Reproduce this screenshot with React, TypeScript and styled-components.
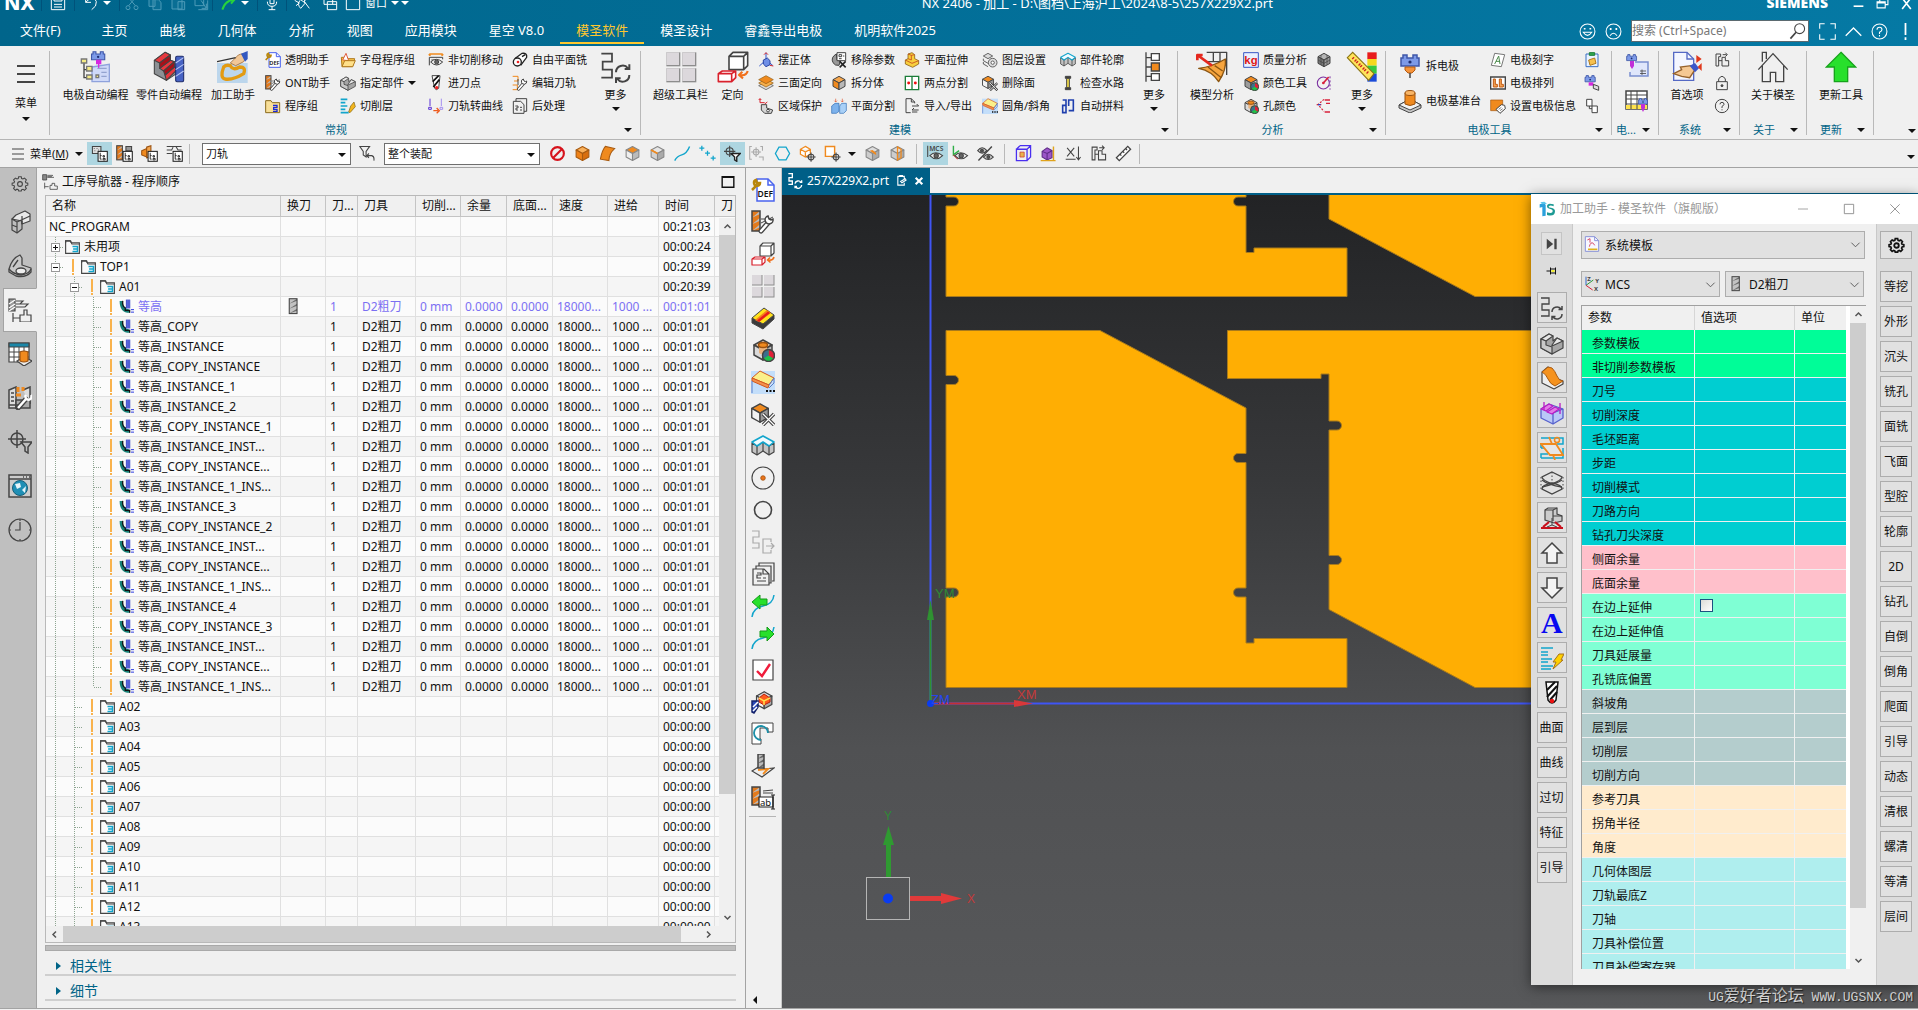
import React from "react";
import styled, { createGlobalStyle, css } from "styled-components";

const INK = "#444";
const ORANGE = "#f08a1e";
const TEAL = "#006487";
const CYAN = "#12a5cc";

const Global = createGlobalStyle`
  *, *::before, *::after { box-sizing: border-box; }
  body { margin: 0; overflow: hidden; }
  button, input, select { font: inherit; color: inherit; }
`;

/* ---------- icons (24 x 24 grid) ---------- */

const cube = (t: string, l: string, r: string, k = INK) => (
  <g stroke={k} strokeLinejoin="round">
    <path d="M12 2 21 7 12 12 3 7Z" fill={t} />
    <path d="M3 7 12 12V22L3 17Z" fill={l} />
    <path d="M21 7 12 12V22L21 17Z" fill={r} />
  </g>
);

const drill = (x: number, w: number, h: number, a: string, b: string, y = 1) => (
  <g stroke="none">
    <rect x={x} y={y} width={w} height={h} fill={a} />
    {[0, 1, 2].map((i) => (
      <path key={i} d={`M${x} ${y + h / 3 + (i * h) / 3}L${x + w} ${y + (i * h) / 3}V${y + (i * h) / 3 + 3}L${x} ${y + h / 3 + (i * h) / 3}Z`} fill={b} />
    ))}
    <rect x={x} y={y} width={w} height={h} fill="none" stroke={INK} />
  </g>
);

const wrench = (
  <g>
    <path d="M10 21 17 13" stroke={INK} strokeWidth="5" strokeLinecap="round" />
    <path d="M10 21 17 13" stroke="#fff" strokeWidth="2.5" strokeLinecap="round" />
    <path d="M22 9a4 4 0 1 1-5-3l1 3 2 1Z" fill="#fff" stroke={INK} />
  </g>
);

const electrode = (
  <g stroke="none">
    <path d="M5 1h4v3h6V1h4v3h2v8H3V4h2Z" fill="#7d9ae8" stroke="#3f57a8" />
    <circle cx="12" cy="8" r="1.6" fill="#1c2c70" />
  </g>
);

const blocks = (
  <path d="M3 3h7v4H7v14H3V3Zm4 10h5M12 8h5v5h5v8H12ZM13 4h6M17 1l3 3-3 3" />
);

const pathRefresh = (
  <g>
    <path d="M1 2H9V8H2V14H9V20H1" strokeWidth="1.3" />
    <path d="M12 16a5 5 0 0 1 9-3M22 10v3.500h-3.500M22 18a5 5 0 0 1-9 3M12 24v-3.500h3.500" strokeWidth="1.500" />
  </g>
);

const eye = (
  <g>
    <path d="M4 15q8-8 18 0-9 9-18 0Z" fill="#eee" />
    <circle cx="13" cy="15" r="3" fill="#666" />
  </g>
);

const target = (
  <g>
    <circle cx="17" cy="17" r="4" />
    <path d="M17 10.500V23.500M10.500 17H23.500" />
  </g>
);

const treeBox = (
  <g>
    <rect x="10" y="9" width="13" height="14" fill="#fff" stroke="#222" />
    <path d="M13 11v9h2M13 15h2M17 15h2v2h-2zM17 19h3v2h-3z" stroke="#222" strokeWidth="1.300" />
  </g>
);

const pie = (
  <g stroke="none">
    <circle cx="17.500" cy="17.500" r="6" fill="#1fc24a" />
    <path d="M17.500 17.500V11.500a6 6 0 0 1 5 9Z" fill="#e02038" />
    <path d="M17.500 17.500V11.500a6 6 0 0 0-5 9Z" fill="#3a6f8e" />
    <circle cx="17.500" cy="17.500" r="6" stroke={INK} />
  </g>
);

const ICONS: Record<string, React.ReactNode> = {
  save: <g stroke="#fff"><path d="M2 2H22V22H2ZM6 2V9H18V2M6 14H18M6 18H18" /></g>,
  undo: <path d="M4 3V11H12M4 11Q16-2 20 10 21 17 13 22" stroke="#fff" />,
  cut: <g stroke="#4d9bb8"><circle cx="6" cy="19" r="3" /><circle cx="18" cy="19" r="3" /><path d="M7 16 18 3M17 16 6 3" /></g>,
  copy: <path d="M3 2H12V17H3ZM9 7H17L21 11V22H9Z" stroke="#4d9bb8" fill="#0a6e94" />,
  paste: <path d="M3 4H18V21H3ZM7 1H14V6H7ZM12 10H22V22H12Z" stroke="#4d9bb8" fill="#0a6e94" />,
  pasteTo: <path d="M3 4H16V16H3ZM12 8 20 20M20 13V20H13M8 22H22V8" stroke="#4d9bb8" />,
  greenCurve: <path d="M2 22Q6 9 18 7M12 1 21 6 15 13" stroke="#27d33c" strokeWidth="3" />,
  mic: <path d="M9 2H15V13H9ZM5 10Q5 17 12 17T19 10M12 17V22M7 22H17" stroke="#fff" />,
  swap: <path d="M1 8 8 12 3 16M7 5 17 12 10 20Q4 14 9 8M22 4 15 9 23 20" stroke="#fff" />,
  windows: <path d="M3 1H16V14M3 1V14H8M8 10H22V22H8ZM8 14H22" stroke="#fff" />,
  square: <path d="M2 0V22H22V0" stroke="#fff" />,

  eprog: <g><g transform="translate(7 0) scale(.55)">{electrode}</g><path d="M9 12 22 10V23H9Z" fill="#cfd9f8" stroke="#8fa2dc" strokeWidth="1" /><path d="M12 6.500H16V10H14.500V13H13.500V10H12Z" fill="#d628e0" stroke="none" /><path d="M3 8V20H6M3 14H6" strokeWidth="1" /><g fill="#f5eb86" stroke="#777" strokeWidth="1"><path d="M1 6H5V9H1ZM5 11.500H9V15H5ZM5 18H9V21H5ZM12 18H14V20H12Z" /></g><path d="M13 13H20M16 16H20M16 19H20" stroke="#93a3d0" strokeWidth="1" /></g>,
  part: <g strokeLinejoin="round" strokeWidth=".8"><path d="M1 7 9 1 13 3V7L16 8V12L19 13V16L10 22 1 17Z" fill="#8d9195" /><path d="M1 7 9 1 13 3 5 9ZM5 13 13 7 16 8 8 15ZM9 18 16 12 19 13 10 22Z" fill="#e8383e" /><path d="M5 9 13 3V7L5 13ZM8 15 16 8V12L9 18Z" fill="#a81019" /><rect x="17" y="4" width="6" height="19" rx="1" fill="#4763c4" stroke="#1f2d6b" /><path d="M17 9 23 5M17 14 23 10M17 19 23 15" stroke="#b9c7f5" /></g>,
  assist: <g stroke="none"><path d="M0 9H23V24H0Z" fill="#bcd6ec" /><path d="M5 12Q2 20 6 21 12 22 20 17 22 12 17 12 12 15 10 11 7 10 5 12Z" stroke="#e39b12" strokeWidth="2.500" /><path d="M10 9 16 3Q20 1 22 4L20 8 14 11Z" fill="#f2c796" stroke="#a06a35" strokeWidth=".6" /><path d="M18 2 23 0V6L21 8Z" fill="#3358c0" /><path d="M0 8 14 5" stroke="#333" strokeWidth="1" /></g>,
  def: <g><path d="M6 1H17L23 7V23H6Z" fill="#fff" stroke="#4a63ee" /><path d="M17 1V7H23" stroke="#4a63ee" /><text x="6.500" y="19" fontSize="8.500" fontFamily="Noto Sans" fontWeight="600" fill="#111" stroke="none">DEF</text><path d="M1 12 6 7M9 5a3 3 0 1 1-4-3l1 3Z" stroke="#b8860b" strokeWidth="2.500" /></g>,
  ont: <g>{drill(1, 8, 20, "#e37a1c", "#bbb")}<path d="M10 9H20M10 13 22 7" strokeWidth="1" />{wrench}</g>,
  folderS: <g><path d="M1 4H9L11 7H22V22H1Z" fill="#f8df98" stroke="#8a6a1c" /><path d="M12 11H18V14H13V17H18V20H12" stroke="#1b2bd6" strokeWidth="2" /></g>,
  folderA: <g><path d="M2 8H9L11 10H22L19 22H3Z" fill="#f9c64e" stroke="#b07a1e" /><path d="M9 2 4 12 13 13Z" fill="#fff" stroke="#e05a3a" /><path d="M3 22 7 13H23L19 22Z" fill="#ffe08a" stroke="#b07a1e" /></g>,
  spec: <g strokeLinejoin="round" strokeWidth="1.200"><path d="M1 8 9 3 13 5V10L17 7 23 10V17L12 23 1 17Z" fill="#a6a6a6" /><path d="M1 8 9 3 13 5 6 10ZM12 14 17 7 23 10 12 15Z" fill="#e6e6e6" /><path d="M1 8 6 10V14L12 16V23L1 17Z" fill="#c9c9c9" /></g>,
  layers: <g><path d="M1 2H11M1 7H8M1 12H11M1 17H8M1 22H13" stroke={CYAN} strokeWidth="2.400" /><path d="M21 6 23 13 15 22 13 21 16 12Z" fill="#f3b51d" stroke="#7d6210" strokeWidth="1" /></g>,
  bolt: <g><path d="M1 2H13M1 6H8M1 9H8M1 13H12M1 16H8M1 20H13M1 23H11" stroke={CYAN} strokeWidth="1.600" /><path d="M19 8H24L21 14H23L13 23 16 16H13Z" fill="#ffd000" stroke="#a5721a" strokeWidth="1" /></g>,
  noncut: <g><path d="M3 6V3H21V6M3 3 1 5M21 3 23 5" stroke={ORANGE} strokeWidth="2" /><path d="M2 8H22V11M2 8V20M5 12H10" />{eye}</g>,
  entry: <g><path d="M6 1H18L16 20Q12 24 10 20Z" fill="#fff" /><path d="M7 10 16 1M8 18 17 7" stroke="#111" strokeWidth="2.600" /><circle cx="13" cy="19" r="2.500" fill="#e22" stroke="none" /></g>,
  pathcurve: <g><path d="M3 1V12M1 14h4v3H1Z" stroke="#5b32d6" /><path d="M20 1V12M18 14h4v3h-4Z" stroke="#a48df0" /><path d="M8 19H15M13 15 17 19 13 23" stroke="#ee5a1c" strokeWidth="2" /></g>,
  free: <g stroke="#222" strokeWidth="2"><path d="M4 10 15 2Q23 1 22 8L13 20" fill="#fff" /><circle cx="8" cy="15" r="6" fill="#fff" /><circle cx="9" cy="15" r="2" fill="#e22" stroke="none" /><path d="M15 7 20 4" /></g>,
  edit: <g><path d="M1 2H9V9H3M1 15H8V22H1" stroke={ORANGE} /><path d="M9 6V15" />{wrench}</g>,
  post: <path d="M6 5V1H22V20H18M2 5H13L18 10V23H2ZM5 12H9V15H6V18H9M12 14H15M12 18H15" />,
  docs: <path d="M8 4V1H23V19H21M5 7V4H20V21H18M2 7H13L18 12V23H2ZM12 7V12H18M6 11H10V13H6V16H10M6 19H15M12 16H15" strokeWidth="1.200" />,
  pathRefresh,
  tiles: <g stroke="none">{[0, 1, 2, 3].map((i) => <g key={i} transform={`translate(${1 + (i % 2) * 12} ${1 + Math.floor(i / 2) * 12})`}><path d="M0 0H10.500V10.500H0Z" fill="#8d8d8d" /><path d="M0 0H9.500V9.500H0Z" fill="#dcd8dc" /></g>)}</g>,
  orient: <g strokeLinejoin="round" strokeWidth="1.200"><path d="M9 4H20V14H9ZM9 4 12 1H23V11L20 14M20 4 23 1" fill="#fff" /><path d="M1 17H11V23H1ZM1 17 4 15H14V20L11 23M11 17 14 15" stroke="#d9212c" fill="#fff" /><path d="M23 15Q22 19 17 18M19 15.500 16.500 18 19.500 20.500" stroke="#f0701c" strokeWidth="1.600" /></g>,
  align: <g><path d="M12 1V12L2 21M12 12 22 20" stroke="#3154c8" /><path d="M8 12 14 9 18 13V19L12 22 8 18Z" fill="#6f8fe6" stroke="#2c46a3" /><path d="M9 4 12 1 15 4M18 20 23 21" stroke="#d3262d" /></g>,
  three: <g strokeLinejoin="round" strokeWidth="1"><path d="M1 16 12 10 23 16 12 22Z" fill="#dcdcdc" /><path d="M1 12 12 6 23 12 12 18Z" fill="#f6ae4b" stroke="#8f5a12" /><path d="M1 7 12 1 23 7 12 13Z" fill="#f08a1e" stroke="#8f5a12" /></g>,
  region: <g><path d="M3 1V7H10M1 3 3 1 5 3M14 6 10 9" stroke="#d9212c" /><path d="M5 10H13V15L22 18 20 23H10L5 18Z" fill="#d5d5d5" /><circle cx="15" cy="19" r="2" fill="#fff" /></g>,
  rmparam: <g><path d="M8 3Q-1 8 3 16 6 21 12 20L14 14 9 12Z" fill="#999" /><path d="M9 1H22V13H9Z" fill="#fff" /><path d="M12 4H16V7H12ZM12 10H16M18 6H20" /><path d="M13 14 22 23M22 14 13 23" stroke="#222" strokeWidth="2.400" /></g>,
  split: cube("#f5a64c", "#f08a1e", "#b8b8b8"),
  psplit: <g strokeWidth="1"><path d="M1 12 6 8H12V20L8 23H1Z" fill="#7db2ec" stroke="#2f6db3" /><path d="M13 12 16 8H23V19L19 23H13Z" fill="#a9d0f7" stroke="#2f6db3" /><path d="M7 1V6M5 4 7 6 9 4M17 1V6M15 4 17 6 19 4" stroke="#e0552c" /></g>,
  pull: <g strokeLinejoin="round" strokeWidth="1.200"><path d="M2 12 6 10V3L12 1 16 4V10L22 13V18L13 23 2 18Z" fill="#f8cf3d" stroke="#8b5d12" /><path d="M6 3 11 5 16 4M11 5V12L6 10M2 12 12 17 22 13" stroke="#c4431d" /></g>,
  twopt: <g><path d="M2 2H22V22H2ZM12 2V22" stroke="#1c7d3a" strokeWidth="2" fill="#fff" /><circle cx="7" cy="12" r="2.200" fill="#e11" stroke="none" /><circle cx="17" cy="12" r="2.200" fill="#e11" stroke="none" /></g>,
  io: <path d="M16 8V6L11 1H3V22H10M11 1V6H16M12 12H22L19 9M22 18H12L15 15M12 21H20" />,
  layerset: <g strokeWidth="1.200"><path d="M2 6 9 2 16 6 9 10ZM2 10V13L9 17M2 15V18L9 22" fill="#ddd" /><circle cx="16" cy="16" r="6.500" fill="#ddd" /><circle cx="16" cy="16" r="2.500" fill="#fff" /></g>,
  delface: <g><g transform="translate(-2 0) scale(.92)">{cube("#f08a1e", "#f2f2f2", "#9a9a9a")}</g><path d="M12 12 23 23M23 12 12 23" stroke={INK} strokeWidth="3.500" /><path d="M12 12 23 23M23 12 12 23" stroke="#fff" strokeWidth="1.200" /></g>,
  fillet: <g strokeWidth="1"><path d="M0 1H24V24H0Z" fill="#c3defa" stroke="none" /><path d="M1 8 9 1 23 8 18 15Z" fill="#fbf08a" stroke="#d3581d" /><path d="M1 8 18 15 17 18 1 11Z" fill="#f2914d" stroke="#d3581d" /><path d="M1 11V23M18 15 23 8V13L18 18" stroke="#5a7fc8" /><path d="M15 21H17M18.500 21H20.500M22 21H24" stroke="#111" strokeWidth="2" /></g>,
  contour: <g strokeLinejoin="round" strokeWidth="1.200"><path d="M1 9V18L6 21 12 17 18 21 23 18V9L18 12 12 8 6 12Z" fill="#c4c4c4" /><path d="M6 12V21M18 12V21M12 8V17" /><path d="M1 8 12 2 23 8 18 12 12 8 6 12Z" fill="#f2fbff" stroke={CYAN} strokeWidth="1.600" /></g>,
  water: <g><path d="M8 2H16V5H8ZM8 19H16V22H8Z" fill="#444" /><path d="M10 5H14V19H10Z" fill="#f7e04b" /></g>,
  nest: <path d="M4 3H9V22H4V11H9M13 19H20V3H13V12" stroke="#1f3fae" strokeWidth="2.400" />,
  moreTree: <g strokeWidth="1"><path d="M6 1V23M6 5H10M6 12H10M6 19H10" /><path d="M10 2H16V7H10ZM10 17H16V22H10Z" fill="#fff" /><path d="M10 9H16V15H10Z" fill={ORANGE} /></g>,
  analysis: <g strokeWidth="1" strokeLinejoin="round"><path d="M8 1H23V18" /><path d="M13 1V8M18 1V9M8 8H23" /><path d="M2 13Q12 12 22 6 23 14 17 23 12 15 2 13Z" fill="#f7a53e" stroke="#8b5512" /><path d="M9 12 19 20M14 11 20 15" stroke="#8b5512" /><path d="M12 11 1 3M1 7V3H5" stroke="#e5281e" strokeWidth="2" /></g>,
  kg: <g><path d="M1 1H23V23H1Z" fill="#e9f0ff" stroke="#3a57c4" /><text x="2" y="18" fontSize="17" fontWeight="700" fontFamily="Liberation Sans" fill="#e01515" stroke="none">kg</text></g>,
  colortool: <g>{cube("#f08a1e", "#9c9c9c", "#c9c9c9")}{pie}</g>,
  holecolor: <g>{cube("#f7d9ba", "#dadada", "#b9b9b9")}<path d="M8 7V15Q12 18 16 15V7Z" fill="#e9b27e" stroke="none" /><ellipse cx="12" cy="7" rx="4.500" ry="2.500" fill="#f08a1e" stroke="#9b5210" />{pie}</g>,
  mesh: <g>{cube("#b5b5b5", "#777", "#999")}<path d="M3 12 12 17 21 12M7.500 4.500V19M16.500 4.500V19" strokeWidth="1" /></g>,
  gauge: <g><circle cx="11" cy="12" r="9" stroke="#7b2fa0" strokeWidth="1.600" /><path d="M11 12 19 3" stroke="#d8203a" strokeWidth="2.500" /><circle cx="11" cy="12" r="2" fill="#d8203a" stroke="none" /><path d="M21 2V22" stroke="#7b2fa0" strokeDasharray="3 3" /></g>,
  dist: <g><path d="M12 2 3 10 12 20M1 10H8" stroke="#d8203a" strokeDasharray="3 2" strokeWidth="1.800" /><path d="M3 10H7" stroke="#2548c8" strokeWidth="2" /><path d="M13 3H21M13 21H21M15 8H21" stroke="#d8203a" strokeWidth="2" /></g>,
  ruler: <g stroke="none"><path d="M16 1H23V6H16Z" fill="#e81c1c" /><path d="M16 6H23V11H16Z" fill="#f4d81c" /><path d="M16 11H23V17H16Z" fill="#36c93c" /><path d="M16 17H23V23H16Z" fill="#1c4bd8" /><path d="M1 5 5 1 21 17 17 22Z" fill="#ffe45a" stroke="#8b7412" strokeWidth=".8" /><path d="M5 5 8 8M8 8 11 11M11 11 14 14M14 14 17 17" stroke="#c22" strokeWidth="2" strokeDasharray="1 1.500" /></g>,
  eld: <g>{electrode}<path d="M7 13H17V16L14 19H10L7 16Z" fill="#f6943a" stroke="#b35a12" strokeWidth="1" /><path d="M12 19V24" stroke="#444" /></g>,
  elbase: <g strokeLinejoin="round" strokeWidth="1"><path d="M1 16 12 10 23 16V19L12 24 1 19Z" fill="#c7c7c7" /><path d="M1 16 12 10 23 16 12 21Z" fill="#f2f2f2" /><path d="M7 4V15Q12 18 17 15V4Z" fill="#f08a1e" stroke="#9b5210" /><ellipse cx="12" cy="4" rx="5" ry="2.500" fill="#f9b566" stroke="#9b5210" /></g>,
  letter: <g><path d="M7 2 22 4 17 22 2 20Z" fill="#fff" stroke="#777" /><path d="M7 18 13 6 15 18M9 14H15" stroke="#4a8a4a" /></g>,
  arrange: <g><path d="M1 3H23V21H1Z" fill="#fff" strokeWidth="2" /><path d="M5 6H8V14H11V18H5ZM14 6H17V14H20V18H14Z" fill="#f3a254" stroke="#c05a12" /></g>,
  info: <g><path d="M1 3H19V19H1Z" fill="#f08a1e" stroke="#a7560d" strokeWidth="1" /><path d="M9 17 17 10 22 11 23 16 15 23Z" fill="#fff" /><path d="M13 17 17 14M15 19 19 16" strokeWidth="1" /></g>,
  note: <g><path d="M3 3H21V22H3Z" fill="#e9f3ff" stroke="#3a6fc4" /><path d="M8 1H16V5H8Z" fill="#2fa84c" stroke="#1c7d3a" /><path d="M7 12 16 9 18 17 9 20Z" fill="#f6c04e" stroke="#b07a1e" /></g>,
  elsmall: <g><g transform="translate(-1 0) scale(.85)">{electrode}</g><path d="M7 11H14V16H7Z" fill="#d628e0" stroke="none" /><path d="M14 14 22 17V23L14 20Z" fill="#ddd" /></g>,
  steps: <path d="M4 2H12V12H4ZM12 12H20V22H12ZM8 12V16H12" fill="#fff" />,
  elview: <g><path d="M10 8H23V22H5V18" fill="#dfe6fb" stroke="#7a8fcf" /><g transform="scale(.55)">{electrode}</g><path d="M5 7H9V12L7 15 5 12Z" fill="#c12fd8" stroke="none" /><path d="M15 17H21M15 19.500H21M17 15.500V21" strokeWidth=".8" /></g>,
  eltable: <g><path d="M1 2H22V20H1Z" fill="#fff" /><path d="M1 16H22V20H1Z" fill="#ffe34d" stroke="none" /><path d="M1 6H22M1 10H22M1 15H22M6 2V20M12 2V20" strokeWidth="1" /><g transform="translate(12 9) scale(.5)">{electrode}</g><path d="M16 15H20V19L18 23 16 19Z" fill="#c12fd8" stroke="none" /></g>,
  pref: <g strokeWidth="1"><path d="M2 1H12L17 6V22H2Z" fill="#f4f6ff" stroke="#5569c4" /><path d="M12 1V6H17" stroke="#5569c4" /><path d="M2 17 8 14 7 12 15 11 18 14 14 20 8 19Z" fill="#f5c893" stroke="#96622c" /><path d="M14 11 18 9 21 13 18 16Z" fill="#3c57c8" stroke="none" /><path d="M19 3 23 6 19 9ZM23 9 20 12 23 15Z" fill="#e0381c" stroke="none" /></g>,
  blocks,
  lock: <g><path d="M4 10H20V22H4ZM7 10V6Q12-2 17 6V10" /><circle cx="12" cy="16" r="1.500" fill={INK} /></g>,
  help: <g><circle cx="12" cy="12" r="10" /><path d="M9 9.500Q9 6.500 12 6.500T15 9.500Q15 11 12 12.500V15M12 17V18.500" /></g>,
  home: <path d="M1 14 12 2 23 14M4 11V23H10V16H14V23H20V11M4 8V1H7V6" strokeWidth="1" />,
  update: <path d="M12 1 23 12H17V23H7V12H1Z" fill="#28e02c" stroke="#17a31c" strokeWidth="1" />,

  tbProgram: <g><path d="M2 2H14V12H2Z" fill="#ddd" /><path d="M4 5H5M8 5H9M5 8H6M10 7H11" />{treeBox}</g>,
  tbTool: <g>{drill(1, 8, 20, "#e37a1c", "#bbb")}<path d="M14 2H22V8H14Z" fill="#999" />{treeBox}</g>,
  tbGeom: <g><path d="M1 8 8 5V17L1 14Z" fill="#f08a1e" stroke="#9b5210" /><path d="M8 3 14 1V17L8 18Z" fill="#f6a64c" stroke="#9b5210" />{treeBox}</g>,
  tbMethod: <g><path d="M1 2H22M1 7H8L10 3M1 12H9M14 2 17 7H22" />{treeBox}</g>,
  filter: <path d="M1 2H15L10 9V17L6 14V9ZM14 12 11 15 14 18M12 15H18Q22 16 21 22" />,
  no: <g stroke="#d6131c" strokeWidth="3"><circle cx="12" cy="12" r="9" /><path d="M6 18 18 6" /></g>,
  cubeO: cube("#f9b05a", "#ef8218", "#d86e0e", "#a85a10"),
  sheet: <path d="M2 20Q4 8 9 2L22 5Q14 12 14 22Z" fill="#f08a1e" stroke="#a85a10" />,
  cubeTop: cube("#f08a1e", "#eee", "#bbb", "#888"),
  cubeEdge: <g>{cube("#e6e6e6", "#d2d2d2", "#aaa", "#888")}<path d="M3 7 12 12" stroke={ORANGE} strokeWidth="2.500" /></g>,
  curve: <path d="M1 22Q4 16 11 14T22 2" stroke={CYAN} strokeWidth="2" />,
  points: <path d="M4 1V8M.500 4.500H7.500M12 8V15M8.500 11.500H15.500M20 15V22M16.500 18.500H23.500" stroke={CYAN} strokeWidth="1.800" />,
  snapFilter: <g><circle cx="8" cy="9" r="5" /><path d="M8 1V17M0 9H16" /><path d="M10 12H23L18 17V23L15 21V17Z" fill="#fff" stroke="#222" strokeWidth="2" /></g>,
  snapDim: <g stroke="#aaa"><path d="M4 2H1V20H4M16 2H19V8" /><circle cx="10" cy="10" r="4" /><path d="M10 3V17M3 10H17M14 17H20V22" /></g>,
  hex: <path d="M7 3H17L22 12 17 21H7L2 12Z" stroke={CYAN} strokeWidth="1.800" />,
  cubeTarget: <g><path d="M9 2 16 6V13L9 17 2 13V6ZM2 6 9 10 16 6M9 10V17" stroke={ORANGE} strokeWidth="1.800" fill="#fff" />{target}</g>,
  boxTarget: <g><path d="M2 2H15V16H2Z" stroke={ORANGE} strokeWidth="2" fill="#fff" />{target}</g>,
  cubeSlant: <g>{cube("#ddd", "#ccc", "#aaa", "#888")}<path d="M8 8 17 14V11L12 7Z" fill={ORANGE} stroke="none" /></g>,
  cubeSection: <g>{cube("#ddd", "#ccc", "#aaa", "#888")}<path d="M12 3 17 6V18L12 21Z" stroke={ORANGE} strokeWidth="1.800" /></g>,
  mcs: <g><text x="3" y="8" fontSize="9.500" fontFamily="Noto Sans" fontWeight="600" fill={INK} stroke="none">MCS</text><path d="M1 1V17" stroke={INK} />{eye}</g>,
  axisEye: <g><path d="M2 1V14L10 8" stroke="#2fae47" strokeWidth="2" /><path d="M2 14 8 20" stroke="#c33" />{eye}</g>,
  eyeOff: <g><path d="M1 8Q7 0 14 8 7 15 1 8Z" fill="#ccc" /><path d="M9 17Q16 9 23 17 16 24 9 17Z" fill="#ccc" /><circle cx="7" cy="8" r="2" fill="#555" /><circle cx="16" cy="17" r="2" fill="#555" /><path d="M2 22 21 2" strokeWidth="2" /></g>,
  wireCube: <g><path d="M2 6H17V22H2ZM7 1H22V17L17 22M2 6 7 1M17 6 22 1" stroke="#4a2ff0" strokeWidth="1.800" /><path d="M7 10H13V17H7Z" fill="#e8b24a" stroke="#c33" strokeWidth="1" /></g>,
  purple: <g><path d="M3 9 10 4 17 8V18L10 21 3 17Z" fill="#9b56c8" stroke="#5d2a86" /><path d="M3 9 10 12 17 8M10 12V21" stroke="#5d2a86" /><path d="M1 22H22M19 2V22" stroke="#e0a31c" strokeWidth="2" /></g>,
  xy: <path d="M3 4 13 16M13 4 3 16M19 2V20M16 17 19 21 22 17M1 20H15" />,
  rulerS: <path d="M2 18 18 2 22 6 6 22ZM7 13 9 15M11 9 13 11M15 5 17 7" fill="#fff" strokeWidth="1.800" />,

  gear: <g><path d="M10 2h4l.600 2.800 2 .8L19 4.200l2.800 2.800-1.500 2.400.8 2L24 12v3l-2.800.600-.9 2 1.500 2.400L19 22.800l-2.400-1.500-2 .7L14 24h-4l-.600-2-2-.8L5 22.800 2.200 20l1.500-2.400-.8-2L0 15v-3l2.900-.600.8-2L2.200 7 5 4.200l2.400 1.400 2-.8Z" transform="translate(1.500 .5) scale(.87)" strokeWidth="1.600" /><circle cx="12" cy="12" r="3.200" /></g>,
  parts: <g strokeLinejoin="round" strokeWidth="1.200"><path d="M4 9 14 5 14 11V19L9 23 4 20Z" fill="#bdbdbd" /><path d="M8 5 17 1 22 4V11L14 14V11L4 9Z" fill="#e9e9e9" /><path d="M4 9 9 12 22 6M9 12V23M14 6V14M4 15 9 17" /></g>,
  bracket: <g strokeLinejoin="round" strokeWidth="1.300"><path d="M1 15Q4 4 12 1L14 4V11L23 14V18Q18 24 8 22L1 18Z" fill="#c8c8c8" /><ellipse cx="13" cy="17" rx="5" ry="3" fill="#eee" /><path d="M1 15Q5 20 13 21 21 20 23 15M10 6 5 13" /></g>,
  opnav: <g strokeWidth="1.200"><path d="M1 1H7V13H1Z" fill="#999" /><path d="M1 6 7 2M1 10 7 6M1 13 7 9" stroke="#fff" /><path d="M8 3H15L12 6H8M8 6H20L17 9H8M5 15V24M5 20H12M12 24V17H16V12H19V17H23V24Z" /></g>,
  tablebox: <g strokeWidth="1.200"><path d="M1 1H21V20H1Z" fill="#fff" /><path d="M1 1H21V5H1Z" fill="#1b87a8" /><path d="M1 10H21M1 15H21M6 5V20M11 5V20M16 5V20" strokeWidth="1" /><path d="M9 19 16 15 24 19 16 24Z" fill="#eee" /><path d="M12 10V19Q16 21 20 19V10Q16 8 12 10Z" fill="#f08a1e" stroke="#9b5210" /></g>,
  machine: <g><path d="M1 4 8 1V22H1ZM15 4 22 1V18" fill="#ddd" /><path d="M8 14H22V22H8Z" fill="#aaa" /><path d="M3 7H6M3 11H6M3 15H6M1 19H14" /><path d="M10 1V6M15 1V5M8 9H13" stroke={ORANGE} strokeWidth="3" /><path d="M10 22 18 13" stroke={INK} strokeWidth="5" strokeLinecap="round" /><path d="M10 22 18 13M23 9a3 3 0 1 1-5 0" stroke="#fff" strokeWidth="2.500" /></g>,
  snap: <g><circle cx="9" cy="9" r="6" /><path d="M9 0V18M0 9H18M13 12H24L20 17V23L17 21V17Z" /></g>,
  globe: <g><path d="M1 1H23V23H1ZM1 5H23" fill="#ccc" /><path d="M15 3H16M18 3H19M21 3H22" /><circle cx="12" cy="14" r="7.500" fill="#1f8fb5" stroke="#18607a" strokeWidth="1" /><path d="M7 10 12 9 13 13 9 15ZM14 16 18 12 17 19Z" fill="#e6f5fa" stroke="none" /></g>,
  clock: <g strokeWidth="1.200"><circle cx="12" cy="12" r="11" /><path d="M12 4V12H7M12 1V3M12 21V23M1 12H3M21 12H23" /></g>,

  eraser: <g strokeLinejoin="round" strokeWidth="1"><path d="M1 12V17L12 23 23 13V9L12 18Z" fill="#3b3b3b" /><path d="M1 12 13 2 23 9 12 18Z" fill="#ffe21c" /><path d="M4 14 16 4 20 7 8 16Z" fill="#f5801c" stroke="none" /><path d="M6 14.500 17 5.500 19 7 8 16Z" fill="#e81c1c" stroke="none" /></g>,
  circleDot: <g><circle cx="12" cy="12" r="11" strokeWidth="1.100" /><circle cx="12" cy="12" r="2.300" fill="#e8741a" stroke="#a5500e" strokeWidth=".8" /></g>,
  circle: <circle cx="12" cy="12" r="8.500" strokeWidth="1.600" />,
  pathExport: <path d="M1 1H8V7H2V13H8V18H1M20 12V9H12V23H20V20M15 16H23M20 13 23 16 20 19" stroke="#aaa" strokeWidth="1.200" />,
  greenLeft: <g><path d="M1 23Q2 14 12 12T23 1" stroke={CYAN} /><path d="M1 8 9 1V5H16V11H9V15Z" fill="#28e02c" stroke="#159a1a" strokeWidth="1" /></g>,
  greenRight: <g><path d="M1 23Q2 14 12 12T23 1" stroke={CYAN} /><path d="M23 8 16 1V5H9V11H16V15Z" fill="#28e02c" stroke="#159a1a" strokeWidth="1" /></g>,
  check: <g><path d="M2 2H22V22H2Z" fill="#fff" strokeWidth="1.200" /><path d="M6 13 11 18 19 6" stroke="#f01c3c" strokeWidth="2.400" /></g>,
  drillCube: <g><g transform="translate(3 0) scale(.85)">{cube("#ddd", "#f4f4f4", "#aaa")}</g><path d="M8 8 13 4 19 8V12L13 15 8 12Z" fill="#ff5a1c" stroke="#b3200e" strokeWidth="1" /><path d="M8 8 13 11 19 8M13 11V15" stroke="#ffe04d" /><path d="M1 11H7L7 17 3 23 1 22Z" fill="#2b49b8" stroke="#16246b" /><path d="M2 17 7 12M2 21 6 17" stroke="#fff" /></g>,
  arc: <g strokeWidth="1"><path d="M1 1H22V10H17V6H9V17H10V22H1Z" fill="#fff" /><path d="M10 18A7 7 0 1 1 17 11" stroke="#1b8fa8" strokeWidth="1.800" /></g>,
  millSurf: <g><path d="M1 17 9 12 14 15 23 14 11 23Z" fill="#eee" strokeWidth="1.200" /><path d="M7 16 17 15 12 20" stroke={ORANGE} strokeWidth="1.800" />{drill(7, 6, 14, "#bbb", "#666", 0)}</g>,
  drillAb: <g>{drill(1, 8, 18, "#e37a1c", "#bbb")}<path d="M12 5 22 4M12 7H22" strokeWidth="1" /><path d="M8 11H22V21H8Z" fill="#fff" stroke="#222" strokeWidth="1.200" /><text x="9" y="19.500" fontSize="9.500" fontFamily="Noto Sans" fill="#111" stroke="none">ab</text><path d="M22 9V23M20 9H24M20 23H24" stroke="#222" strokeWidth="1.200" /></g>,

  logo: <g stroke="none"><path d="M1 5 8 3 10 6V22L5 23V9L1 10Z" fill="#2aa0dc" /><path d="M2 2 8 1 12 4 5 5Z" fill="#58c4ea" /><path d="M22 5Q12 2 12 8 12 11 17 12T20 17Q18 19 12 17V21Q24 24 24 15 24 11 18 10T16 7Q18 6 22 8Z" fill="#1d9a94" /></g>,
  skip: <g stroke="none" fill="#444"><path d="M3 3 14 12 3 21ZM16 3H20V21H16Z" /></g>,
  pin: <g><path d="M1 12H9M9 5V19M9 8H19V16H9M19 5V19" stroke="#111" strokeWidth="2" /><path d="M11 10H17V14H11Z" fill="#f3ef2a" stroke="none" /></g>,
  sheetO: <g strokeLinejoin="round"><path d="M2 6V17L14 23 23 18V15L15 12 8 1Z" fill="#eee" strokeWidth="1.200" /><path d="M2 6 8 1 12 2Q15 5 17 10T23 15L15 20Q10 18 8 13T2 6Z" fill="#f5921e" stroke="#a85a10" strokeWidth="1" /></g>,
  purpleCube: <g strokeLinejoin="round" strokeWidth="1.300"><path d="M1 8 9 3 23 8V17L13 23 1 17Z" fill="#b9c8f7" stroke="#5560cc" /><path d="M13 12V23M13 12 23 8" stroke="#5560cc" /><path d="M1 8 9 3 13 5 6 10ZM7 11 15 6 19 8 12 13Z" fill="#e27be8" stroke="#b81cc4" /><path d="M4 9V1M20 2V13" stroke="#b81cc4" /></g>,
  wireArea: <g><path d="M1 2H23V8H17M1 12H5M1 12V8M1 22H23V12M1 22V18H8" stroke={CYAN} /><path d="M1 8H16L23 19H10ZM9 1 12 8M13 19 15 24" fill="#e6e6e6" stroke={ORANGE} strokeWidth="1.800" /><circle cx="17" cy="4" r="2.500" stroke={ORANGE} /></g>,
  wireframe: <g strokeWidth="1.300"><path d="M12 1 22 6Q22 9 12 13 2 9 2 6ZM2 18Q2 14 12 12 22 14 22 18L12 23Z" /><path d="M2 9Q8 14 22 16M22 9Q16 13 2 16" /><path d="M1 6V18M23 6V18M12 1V13" strokeDasharray="1.500 2" strokeWidth="1" /></g>,
  machineRed: <g strokeWidth="1.200"><path d="M5 4 8 2H17V8L22 10V15L14 17 5 14Z" fill="#ccc" /><path d="M5 4H13V15M13 4 17 2M13 10 22 10" /><path d="M3 21 9 16M21 21 15 16M1 22H23" stroke="#c8101c" strokeWidth="2.200" /><path d="M12 12V19L7 21M12 19 17 21" strokeWidth="1" /></g>,
  arrowUp: <path d="M12 2 22 12H17V22H7V12H2Z" fill="#f4f4f4" />,
  arrowDown: <path d="M12 22 22 12H17V2H7V12H2Z" fill="#f4f4f4" />,
  letterA: <text x="1" y="22" fontSize="30" fontWeight="700" fontFamily="Liberation Serif" fill="#0808f0" stroke="none">A</text>,
  drillRed: <g><path d="M6 1H18L16 19Q12 25 8 19Z" fill="#fff" stroke="#111" /><path d="M7 9 15 1M7 16 17 5M10 19 17 11" stroke="#111" strokeWidth="2" /><circle cx="12" cy="20" r="2.200" fill="#e11" stroke="none" /></g>,
  template: <g><path d="M2 1H16L22 7V23H2Z" fill="#f7f8ff" stroke="#8a93d8" /><path d="M16 1V7H22" stroke="#8a93d8" /><path d="M5 6 9 4V10M8 16Q10 8 14 11L16 14" stroke="#d64b6a" /><path d="M6 20H20" stroke="#e0b21c" strokeWidth="2.500" /></g>,
  axes: <g><path d="M3 1V14" stroke="#3568c8" /><path d="M3 14 14 6" stroke="#2f9a3c" /><path d="M3 14 13 21" stroke="#d8203a" /><g fontSize="9" fontFamily="Noto Sans" fontWeight="700" fill={INK} stroke="none"><text x="5" y="7">Z</text><text x="17" y="11">Y</text><text x="15" y="23">X</text></g></g>,
  drillGrey: <g>{drill(6, 11, 21, "#c2c2c2", "#6d6d6d")}</g>,

  opFolder: <g><path d="M1 3H8L10 6H23V23H1Z" fill="#fafafa" strokeWidth="1.800" /><path d="M1 6V3H9L11 8H23" strokeWidth="1.800" /><path d="M12 12H20V16H13M12 20H20V16" stroke={CYAN} strokeWidth="2.400" /></g>,
  op: <g><path d="M1 3H6Q5 14 17 17V22Q1 22 1 3Z" fill="#157f74" stroke="none" /><path d="M6 3Q5 12 10 14V18H17V22" stroke="#111" strokeWidth="2" /><path d="M11 1H18V15H11Z" fill="#3b48c8" stroke="none" /><path d="M13 1V15M16 1V15" stroke="#8b95f0" strokeWidth="1" /><path d="M19 17H24M19 21H24" stroke="#2030e0" /></g>,
  navTitle: <g strokeWidth="1.200"><path d="M1 1H7V9H1Z" fill="#888" /><path d="M8 2H16L14 4H8M8 5H18M4 13V22M4 19H10M12 23V17H15V14H19V18H23V23Z" /></g>,
  smile: <g stroke="#fff"><circle cx="12" cy="12" r="10.500" /><path d="M6 13Q12 22 18 13Z" /><path d="M8 7V9M16 7V9" strokeWidth="2.400" /></g>,
  frown: <g stroke="#fff"><circle cx="12" cy="12" r="10.500" /><path d="M7 18Q12 11 17 18" /><path d="M8 7V10M16 7V10" strokeWidth="2.400" /></g>,
  lens: <g><circle cx="15" cy="8" r="7" /><path d="M10 13 2 22" strokeWidth="2.400" /></g>,
  expand: <path d="M1 8V1H8M16 1H23V8M23 16V23H16M8 23H1V16" stroke="#fff" />,
  chevUp: <path d="M1 18 12 7 23 18" stroke="#fff" strokeWidth="1.800" />,
  helpW: <g stroke="#fff"><circle cx="12" cy="12" r="10.500" /><path d="M8.500 9.500Q8.500 6 12 6T15.500 9.500Q15.500 11 12 13V15.500M12 17V19" /></g>,
  bang: <path d="M12 0V17M12 20V24" stroke="#fff" strokeWidth="2.500" />,
  minW: <path d="M3 17H21" stroke="#fff" strokeWidth="3" />,
  restoreW: <path d="M7 8V3H22V14H17M2 9H17V20H2ZM2 11H17" stroke="#fff" strokeWidth="2" />,
  closeW: <path d="M4 2 20 22M20 2 4 22" stroke="#fff" strokeWidth="3" />,
  minG: <path d="M2 12H22" stroke="#888" />,
  maxG: <path d="M4 4H20V20H4Z" stroke="#888" />,
  closeG: <path d="M4 4 20 20M20 4 4 20" stroke="#888" />,
  panelMax: <path d="M2 3H22V21H2ZM2 4H22" stroke="#111" strokeWidth="2.400" />,
  tabEdit: <path d="M18 8V3H4V22H18V17M8 3V1H14V3M10 14 20 8 22 11 13 17Z" stroke="#fff" strokeWidth="2.400" />,
  tabPath: <path d="M2 1H8V7H3V12H8V17H2M12 16a5 5 0 0 1 9-2M22 11v3h-3M22 18a5 5 0 0 1-9 3M12 23v-3h3" stroke="#fff" strokeWidth="2" />,
  tabClose: <path d="M4 4 20 20M20 4 4 20" stroke="#fff" strokeWidth="5" />,
  chevU: <path d="M4 16 12 8 20 16" stroke="#555" strokeWidth="4" />,
  chevD: <path d="M4 8 12 16 20 8" stroke="#555" strokeWidth="4" />,
  chevL: <path d="M16 4 8 12 16 20" stroke="#555" strokeWidth="4" />,
  chevR: <path d="M8 4 16 12 8 20" stroke="#555" strokeWidth="4" />,
  chevThin: <path d="M3 8 12 17 21 8" stroke="#555" strokeWidth="2" />,
};

const Ico = ({ n, s = 16 }: { n: string; s?: number }) => (
  <Svg width={s} height={s} viewBox="0 0 24 24" fill="none" stroke={INK} strokeWidth={1.5} aria-hidden="true">
    {ICONS[n]}
  </Svg>
);

const Svg = styled.svg`
  display: block;
  flex: none;
`;

const Caret = styled.span<{ $light?: boolean; $side?: boolean }>`
  flex: none;
  width: 0;
  height: 0;
  border: 4px solid transparent;
  ${(p) =>
    p.$side
      ? css`border-left: 5px solid ${TEAL}; border-right: 0;`
      : css`border-top-color: ${p.$light ? "#fff" : "#111"}; border-bottom: 0;`}
`;

const bare = css`
  border: 0;
  padding: 0;
  background: none;
  cursor: pointer;
`;

/* ---------- page frame ---------- */

const Page = styled.div`
  display: flex;
  flex-direction: column;
  height: 100vh;
  overflow: hidden;
  background: #f0f0f0;
  color: #111;
  font: 12px/16px "Noto Sans", "Noto Sans CJK SC", sans-serif;
`;

const Header = styled.header`
  flex: none;
  height: 46px;
  color: #fff;
  background: linear-gradient(90deg, #00658b, #03719b 60%, #0579a4);
  display: flex;
  flex-direction: column;
  justify-content: flex-end;
  overflow: hidden;
`;

const TitleRow = styled.div`
  flex: none;
  height: 26px;
  display: flex;
  align-items: center;
  padding-left: 4px;
`;

const Quick = styled.div`
  flex: none;
  display: flex;
  align-items: center;
  width: 420px;
  font-size: 11px;
`;

const Brand = styled.strong`
  font-size: 20px;
  font-weight: 800;
  width: 37px;
`;

const QuickButton = styled.button<{ $w?: number }>`
  ${bare}
  flex: none;
  display: flex;
  align-items: center;
  justify-content: center;
  gap: 4px;
  width: ${(p) => p.$w ?? 23}px;
  height: 24px;
`;

const QuickRule = styled.span`
  width: 1px;
  height: 16px;
  background: #00527a;
`;

const WindowTitle = styled.span`
  font-size: 13px;
  margin-left: 26%;
  white-space: nowrap;
`;

const WindowControls = styled.div`
  display: flex;
  align-items: center;
  margin-left: auto;
`;

const Siemens = styled.strong`
  font: 800 14px/16px "Open Sans", sans-serif;
  margin-right: 18px;
`;

const MenuRow = styled.nav`
  flex: none;
  height: 30px;
  display: flex;
  align-items: center;
  font-size: 13px;
`;

const Tab = styled.button<{ $active?: boolean; $file?: boolean }>`
  ${bare}
  height: 26px;
  padding: ${(p) => (p.$file ? "0 25px 0 20px" : "0 16px")};
  line-height: 22px;
  white-space: nowrap;
  border-bottom: 2px solid ${(p) => (p.$active ? "#ffc72e" : "transparent")};
  && { color: ${(p) => (p.$active ? "#ffc72e" : "#fff")}; }
`;

const HeadTools = styled.div`
  margin-left: auto;
  display: flex;
  align-items: center;
`;

const HeadButton = styled.button<{ $tight?: boolean }>`
  ${bare}
  width: ${(p) => (p.$tight ? 24 : 26)}px;
  display: flex;
  justify-content: center;
`;

const Search = styled.label`
  display: flex;
  align-items: center;
  width: 178px;
  height: 22px;
  margin: 0 5px;
  background: #fff;
  border: 1px solid #5b6a70;
  padding-right: 2px;
  input {
    flex: 1;
    min-width: 0;
    border: 0;
    padding: 0;
    outline: 0;
    background: none;
    font-size: 12px;
    color: #333;
  }
  input::placeholder { color: #777; opacity: 1; }
`;

/* ---------- ribbon ---------- */

const Ribbon = styled.div`
  flex: none;
  display: flex;
  height: 94px;
  border-bottom: 1px solid #b5b5b5;
  font-size: 11px;
`;

const Group = styled.section<{ $w: number }>`
  flex: none;
  width: ${(p) => p.$w}px;
  display: flex;
  flex-direction: column;
  padding-top: 2px;
`;

const GroupBody = styled.div<{ $pad: number }>`
  display: flex;
  height: 73px;
  padding-left: ${(p) => p.$pad}px;
`;

const GroupFoot = styled.div`
  display: flex;
  align-items: center;
  height: 18px;
  color: ${TEAL};
  > span { flex: 1; text-align: center; }
`;

const CornerButton = styled.button`
  ${bare}
  width: 18px;
  height: 16px;
  padding-left: 2px;
  display: flex;
  align-items: center;
`;

const Rule = styled.span<{ $h?: number; $gap?: number }>`
  flex: none;
  width: 1px;
  height: ${(p) => p.$h ?? 84}px;
  margin: ${(p) => (p.$h ? 0 : 5)}px ${(p) => p.$gap ?? 0}px 0;
  background: #b9b9b9;
`;

const Big = styled.button<{ $w: number }>`
  ${bare}
  flex: none;
  width: ${(p) => p.$w}px;
  padding-top: 3px;
  display: flex;
  flex-direction: column;
  align-items: center;
  gap: 4px;
  white-space: nowrap;
`;

const MenuBig = styled(Big)`
  padding-top: 17px;
  gap: 6px;
  svg { margin-bottom: 6px; }
`;

const Column = styled.div<{ $w: number; $mid?: boolean }>`
  flex: none;
  width: ${(p) => p.$w}px;
  padding-left: 5px;
  display: grid;
  grid-auto-rows: ${(p) => (p.$mid ? 35 : 23)}px;
`;

const Small = styled.button`
  ${bare}
  display: flex;
  align-items: center;
  gap: 4px;
  white-space: nowrap;
`;

type Item = [icon: string, label: string, caret?: boolean, iconOnly?: boolean];
type Block =
  | { kind: "big"; w: number; icon: string; label: string; caret?: boolean }
  | { kind: "col"; w: number; items: Item[]; mid?: boolean };

const big = (w: number, icon: string, label: string, caret = false): Block => ({ kind: "big", w, icon, label, caret });
const col = (w: number, items: Item[], mid = false): Block => ({ kind: "col", w, items, mid });

const GROUPS: { name: string; w: number; pad: number; blocks: Block[] }[] = [
  {
    name: "常规", w: 590, pad: 9, blocks: [
      big(73, "eprog", "电极自动编程"), big(74, "part", "零件自动编程"), big(54, "assist", "加工助手"),
      col(75, [["def", "透明助手"], ["ont", "ONT助手"], ["folderS", "程序组"]]),
      col(88, [["folderA", "字母程序组"], ["spec", "指定部件", true], ["layers", "切削层"]]),
      col(84, [["noncut", "非切削移动"], ["entry", "进刀点"], ["pathcurve", "刀轨转曲线"]]),
      col(84, [["free", "自由平面铣"], ["edit", "编辑刀轨"], ["post", "后处理"]]),
      big(49, "pathRefresh", "更多", true),
    ],
  },
  {
    name: "建模", w: 536, pad: 8, blocks: [
      big(63, "tiles", "超级工具栏"), big(41, "orient", "定向"),
      col(73, [["align", "摆正体"], ["three", "三面定向"], ["region", "区域保护"]]),
      col(73, [["rmparam", "移除参数"], ["split", "拆分体"], ["psplit", "平面分割"]]),
      col(78, [["pull", "平面拉伸"], ["twopt", "两点分割"], ["io", "导入/导出"]]),
      col(78, [["layerset", "图层设置"], ["delface", "删除面"], ["fillet", "圆角/斜角"]]),
      col(76, [["contour", "部件轮廓"], ["water", "检查水路"], ["nest", "自动拼料"]]),
      big(46, "moreTree", "更多", true),
    ],
  },
  {
    name: "分析", w: 207, pad: 8, blocks: [
      big(52, "analysis", "模型分析"),
      col(73, [["kg", "质量分析"], ["colortool", "颜色工具"], ["holecolor", "孔颜色"]]),
      col(29, [["mesh", "网格", false, true], ["gauge", "半径", false, true], ["dist", "间距", false, true]]),
      big(44, "ruler", "更多", true),
    ],
  },
  {
    name: "电极工具", w: 225, pad: 7, blocks: [
      col(92, [["eld", "拆电极"], ["elbase", "电极基准台"]], true),
      col(94, [["letter", "电极刻字"], ["arrange", "电极排列"], ["info", "设置电极信息"]]),
      col(28, [["note", "备注", false, true], ["elsmall", "电极体", false, true], ["steps", "台阶", false, true]]),
    ],
  },
  { name: "电...", w: 46, pad: 8, blocks: [col(34, [["elview", "电极图", false, true], ["eltable", "电极表", false, true]], true)] },
  {
    name: "系统", w: 80, pad: 6, blocks: [
      big(44, "pref", "首选项"),
      col(28, [["blocks", "移动", false, true], ["lock", "锁定", false, true], ["help", "帮助", false, true]]),
    ],
  },
  { name: "关于", w: 66, pad: 7, blocks: [big(52, "home", "关于模圣")] },
  { name: "更新", w: 66, pad: 7, blocks: [big(54, "update", "更新工具")] },
];

const BlockView = ({ b }: { b: Block }) =>
  b.kind === "big" ? (
    <Big $w={b.w}>
      <Ico n={b.icon} s={32} />
      {b.label}
      {b.caret && <Caret />}
    </Big>
  ) : (
    <Column $w={b.w} $mid={b.mid}>
      {b.items.map(([icon, label, caret, only]) => (
        <Small key={icon} aria-label={label}>
          <Ico n={icon} s={b.mid ? 24 : 16} />
          {!only && label}
          {caret && <Caret />}
        </Small>
      ))}
    </Column>
  );

const RibbonEnd = styled.div`
  flex: 1;
  display: flex;
  justify-content: flex-end;
  align-items: flex-end;
  padding: 0 -6px 1px 0;
  margin-right: -6px;
`;

/* ---------- selection bar ---------- */

const Bar = styled.div`
  flex: none;
  display: flex;
  align-items: center;
  height: 28px;
  border-bottom: 1px solid #a3a3a3;
  font-size: 11px;
`;

const MenuButton = styled.button`
  ${bare}
  display: flex;
  align-items: center;
  gap: 6px;
  width: 87px;
  padding-left: 12px;
`;

const Tool = styled.button<{ $on?: boolean; $wide?: boolean }>`
  ${bare}
  flex: none;
  display: flex;
  align-items: center;
  justify-content: center;
  width: ${(p) => (p.$wide ? 33 : 25)}px;
  height: 23px;
  background: ${(p) => (p.$on ? "#aed6e1" : "none")};
`;

const PickTools = styled.div`
  display: flex;
  margin-left: 5px;
`;

const BarCaret = styled.button`
  ${bare}
  width: 15px;
  display: flex;
  align-items: center;
  padding-left: 3px;
`;

const SelectBox = styled.label<{ $w: number; $lead?: boolean }>`
  position: relative;
  width: ${(p) => p.$w}px;
  height: 22px;
  margin-left: ${(p) => (p.$lead ? 10 : 0)}px;
  select {
    appearance: none;
    width: 100%;
    height: 100%;
    padding: 0 16px 0 3px;
    border: 1px solid #6f6f6f;
    border-radius: 0;
    background: #fff;
  }
  > span {
    position: absolute;
    right: 5px;
    top: 10px;
    pointer-events: none;
  }
`;

const BarEnd = styled.span`
  margin-left: auto;
  width: 11px;
  padding-top: 6px;
`;

/* ---------- work area ---------- */

const Work = styled.div`
  flex: 1;
  min-height: 0;
  display: flex;
  margin-bottom: 1px;
  border-bottom: 1px solid #a3a3a3;
`;

const Rail = styled.aside`
  flex: none;
  width: 37px;
  background: #bfbfbf;
  border-right: 1px solid #a3a3a3;
`;

const RailTab = styled.button<{ $on?: boolean; $first?: boolean }>`
  ${bare}
  display: flex;
  align-items: center;
  justify-content: center;
  width: 34px;
  height: ${(p) => (p.$first ? 32 : 44)}px;
  margin-left: 3px;
  ${(p) => p.$on && css`
    background: #f0f0f0;
    border: 1px solid #a3a3a3;
    border-right-color: #f0f0f0;
  `}
`;

const Navigator = styled.section`
  flex: none;
  width: 709px;
  display: flex;
  flex-direction: column;
  border-right: 1px solid #a3a3a3;
  padding: 0 9px 7px 8px;
`;

const NavTitle = styled.h2`
  display: flex;
  align-items: center;
  gap: 4px;
  height: 27px;
  margin: 0 0 0 -3px;
  font-size: 12px;
  font-weight: 400;
  button { ${bare} margin-left: auto; margin-right: 1px; }
`;

const GridFrame = styled.div`
  flex: 1;
  min-height: 0;
  position: relative;
  display: flex;
  flex-direction: column;
  border: 1px solid #b9b9b9;
`;

const GridClip = styled.div`
  flex: 1;
  min-height: 0;
  overflow: hidden;
`;

const Grid = styled.table`
  width: 100%;
  table-layout: fixed;
  border-collapse: separate;
  border-spacing: 0;
  line-height: 19px;
  th, td {
    border-right: 1px solid #e0e0e0;
    border-bottom: 1px solid #e0e0e0;
    padding: 0 0 0 4px;
    height: 20px;
    overflow: hidden;
    white-space: nowrap;
    font-weight: 400;
    text-align: left;
  }
  th {
    height: 21px;
    line-height: 20px;
    padding-left: 6px;
    border-color: #c4c4c4;
  }
  th:last-child, td:last-child { border-right: 0; }
  td:first-child { padding: 0; }
`;

const Row = styled.tr<{ $alt: boolean; $hot?: boolean }>`
  background: ${(p) => (p.$alt ? "#f5f5f5" : "#fbfbfb")};
  color: ${(p) => (p.$hot ? "#7b70f2" : "#111")};
`;

const TreeCell = styled.div<{ $root?: boolean }>`
  display: flex;
  align-items: center;
  height: 19px;
  padding-left: ${(p) => (p.$root ? 3 : 0)}px;
  > svg + span { margin-left: 4px; }
`;

const Alert = styled.i`
  flex: none;
  width: 2px;
  height: 16px;
  margin: 0 7px;
  background: linear-gradient(#f9b24c 13px, transparent 13px, transparent 14px, #f9b24c 14px);
`;

const SideScroll = styled.div`
  position: absolute;
  top: 22px;
  right: 0;
  bottom: 16px;
  width: 16px;
  display: grid;
  grid-template-rows: 17px 1fr 17px;
  background: #f0f0f0;
  button { ${bare} display: grid; place-items: center; }
`;

const Thumb = styled.div<{ $size: number; $flat?: boolean }>`
  background: #cdcdcd;
  ${(p) => (p.$flat ? `width: ${p.$size}%` : `height: ${p.$size}%`)};
`;

const FootScroll = styled.div`
  flex: none;
  height: 16px;
  display: grid;
  grid-template-columns: 17px 1fr 17px;
  margin-right: 18px;
  button { ${bare} display: grid; place-items: center; }
`;

const Splitter = styled.div`
  flex: none;
  height: 6px;
  margin-top: 2px;
  background: #bdbdbd;
  border: 1px solid #a9a9a9;
`;

const Fold = styled.button`
  ${bare}
  flex: none;
  display: flex;
  align-items: center;
  gap: 9px;
  height: 25px;
  padding: 6px 0 0 11px;
  border-bottom: 2px solid #cfcfcf;
  font-size: 14px;
  && { color: ${TEAL}; }
`;

const SideTools = styled.aside`
  flex: none;
  width: 36px;
  display: flex;
  flex-direction: column;
  align-items: center;
  padding: 6px 2px 0 0;
  border-right: 1px solid #c9c9c9;
  button { ${bare} flex: none; height: 32px; display: flex; align-items: center; }
  hr { flex: none; width: 27px; margin: 2px 0; border: 0; border-top: 1px solid #b5b5b5; }
`;

const Collapse = styled.span`
  margin: auto auto 4px 7px;
  border: 4px solid transparent;
  border-right-color: #111;
  border-left: 0;
`;

const Doc = styled.main`
  flex: 1;
  min-width: 0;
  position: relative;
  display: flex;
  flex-direction: column;
`;

const DocTabs = styled.div`
  flex: none;
  height: 27px;
  border-bottom: 2px solid #005f87;
`;

const DocTab = styled.div`
  display: flex;
  align-items: center;
  gap: 4px;
  width: 148px;
  height: 25px;
  padding-left: 5px;
  background: #005f87;
  color: #fff;
  button { ${bare} }
  button:first-of-type { margin-left: 3px; margin-right: 3px; }
`;

const Canvas = styled.div`
  flex: 1;
  min-height: 0;
  background: linear-gradient(#222325, #37383a 35%, #505153 68%, #57585a);
  overflow: hidden;
  svg { display: block; width: 100%; height: 100%; }
`;

const Watermark = styled.span`
  position: absolute;
  right: 5px;
  bottom: 1px;
  color: #d9d9d9;
  text-shadow: 1px 1px 1px #222;
  font: 13px/18px "Liberation Mono", "Noto Sans CJK SC", monospace;
  white-space: pre;
  b { font-weight: 400; font-size: 16px; }
`;

/* ---------- assistant window ---------- */

const Window = styled.section`
  position: absolute;
  top: 26px;
  right: 0;
  bottom: 23px;
  width: 387px;
  display: flex;
  flex-direction: column;
  background: #f0f0f0;
  box-shadow: 0 2px 12px rgba(0, 0, 0, 0.5);
`;

const WinTitle = styled.header`
  flex: none;
  display: flex;
  align-items: center;
  height: 30px;
  padding-left: 8px;
  background: #fff;
  color: #999;
  > span { margin: 0 auto 0 5px; }
  button { ${bare} width: 46px; display: grid; place-items: center; }
`;

const WinBody = styled.div`
  flex: 1;
  min-height: 0;
  display: flex;
`;

const WinRail = styled.div<{ $right?: boolean }>`
  flex: none;
  width: 42px;
  display: flex;
  flex-direction: column;
  align-items: center;
  gap: 4px;
  padding: ${(p) => (p.$right ? "7px 3px 0 0" : "8px 0 0")};
  background: #dcdcdc;
  border: 0 solid #c9c9c9;
  border-width: ${(p) => (p.$right ? "0 0 0 1px" : "0 1px 0 0")};
`;

const WinButton = styled.button<{ $kind?: "small" | "pin" | "gear" | "wide" }>`
  ${bare}
  flex: none;
  display: grid;
  place-items: center;
  width: 30px;
  height: 31px;
  background: #e1e1e1;
  border: 1px solid #adadad;
  white-space: nowrap;
  ${(p) => p.$kind === "small" && css`width: 21px; height: 23px; border-color: #c4c4c4;`}
  ${(p) => p.$kind === "pin" && css`width: 21px; height: 23px; border: 0; background: none; margin-bottom: 6px;`}
  ${(p) => p.$kind === "gear" && css`
    width: 32px;
    height: 28px;
    margin-bottom: 8px;
    svg * { stroke: #111; stroke-width: 2.6; }
  `}
  ${(p) => p.$kind === "wide" && css`width: 32px;`}
`;

const WinMain = styled.div`
  flex: 1;
  min-width: 0;
  display: flex;
  flex-direction: column;
  padding: 7px 10px 16px 8px;
`;

const Combos = styled.div`
  display: flex;
  gap: 5px;
  margin: 12px 2px 8px 0;
`;

const Combo = styled.label<{ $tall?: boolean }>`
  position: relative;
  flex: 1;
  height: ${(p) => (p.$tall ? 28 : 26)}px;
  ${(p) => p.$tall && css`flex: none; margin-right: 1px;`}
  select {
    appearance: none;
    width: 100%;
    height: 100%;
    padding: 1px 18px 0 23px;
    border: 1px solid #adadad;
    border-radius: 0;
    background: #e1e1e1;
  }
  svg { position: absolute; top: 5px; left: 3px; pointer-events: none; }
  svg:last-child { left: auto; top: 8px; right: 4px; }
`;

const ParamFrame = styled.div`
  flex: 1;
  min-height: 0;
  position: relative;
  border-top: 1px solid #a0a0a0;
  border-left: 1px solid #a0a0a0;
  background: #fff;
  overflow: hidden;
`;

const ParamTable = styled.table`
  width: 264px;
  table-layout: fixed;
  border-collapse: separate;
  border-spacing: 0;
  th {
    height: 24px;
    padding: 0 0 0 6px;
    background: #f0f0f0;
    border-right: 1px solid #d6d6d6;
    font-weight: 400;
    text-align: left;
  }
  td {
    height: 24px;
    padding: 5px 0 0 5px;
    border-right: 1px solid #f0f0f0;
    border-bottom: 1px solid #f0f0f0;
    white-space: nowrap;
  }
  td:first-child { padding-left: 10px; }
  td:last-child, th:last-child { border-right: 0; }
`;

const ParamRow = styled.tr<{ $bg: string }>`
  background: ${(p) => p.$bg};
`;

const Tick = styled.input`
  appearance: none;
  display: block;
  width: 13px;
  height: 13px;
  margin: 0 0 5px;
  border: 1px solid #1c5180;
  background: linear-gradient(135deg, #dcdcd7, #fff);
`;

const ParamScroll = styled(SideScroll)`
  top: 0;
  bottom: 0;
`;

const LEFT_TOOLS = ["pathRefresh", "spec", "sheetO", "purpleCube", "wireArea", "wireframe", "machineRed", "arrowUp", "arrowDown", "letterA", "bolt", "drillRed"];
const LEFT_TEXT = ["曲面", "曲线", "过切", "特征", "引导"];
const RIGHT_TEXT = ["等挖", "外形", "沉头", "铣孔", "面铣", "飞面", "型腔", "轮廓", "2D", "钻孔", "自倒", "倒角", "爬面", "引导", "动态", "清根", "螺清", "等清", "层间"];

const PARAMS: [color: string, names: string[]][] = [
  ["#00fd98", ["参数模板", "非切削参数模板"]],
  ["#00ced1", ["刀号", "切削深度", "毛坯距离", "步距", "切削模式", "刀路方向", "钻孔刀尖深度"]],
  ["#ffc0cb", ["侧面余量", "底面余量"]],
  ["#7fffd4", ["在边上延伸", "在边上延伸值", "刀具延展量", "孔铣底偏置"]],
  ["#b4cdcd", ["斜坡角", "层到层", "切削层", "切削方向"]],
  ["#ffebcd", ["参考刀具", "拐角半径", "角度"]],
  ["#afeeee", ["几何体图层", "刀轨最底Z", "刀轴", "刀具补偿位置", "刀具补偿寄存器"]],
];

const Assistant = () => (
  <Window aria-label="加工助手">
    <WinTitle>
      <Ico n="logo" />
      <span>加工助手 - 模圣软件（旗舰版）</span>
      <button aria-label="最小化"><Ico n="minG" s={12} /></button>
      <button aria-label="最大化"><Ico n="maxG" s={14} /></button>
      <button aria-label="关闭"><Ico n="closeG" s={14} /></button>
    </WinTitle>
    <WinBody>
      <WinRail>
        <WinButton $kind="small" aria-label="收起"><Ico n="skip" s={14} /></WinButton>
        <WinButton $kind="pin" aria-label="固定"><Ico n="pin" s={12} /></WinButton>
        {LEFT_TOOLS.map((n) => <WinButton key={n} aria-label={n}><Ico n={n} s={24} /></WinButton>)}
        {LEFT_TEXT.map((t) => <WinButton key={t}>{t}</WinButton>)}
      </WinRail>
      <WinMain>
        <Combo $tall>
          <Ico n="template" />
          <select aria-label="模板"><option>系统模板</option></select>
          <Ico n="chevThin" s={11} />
        </Combo>
        <Combos>
          <Combo>
            <Ico n="axes" />
            <select aria-label="坐标系"><option>MCS</option></select>
            <Ico n="chevThin" s={11} />
          </Combo>
          <Combo>
            <Ico n="drillGrey" />
            <select aria-label="刀具"><option>D2粗刀</option></select>
            <Ico n="chevThin" s={11} />
          </Combo>
        </Combos>
        <ParamFrame>
          <ParamTable>
            <colgroup><col width="113" /><col width="100" /><col width="51" /></colgroup>
            <thead><tr><th>参数</th><th>值选项</th><th>单位</th></tr></thead>
            <tbody>
              {PARAMS.flatMap(([bg, names]) =>
                names.map((name) => (
                  <ParamRow key={name} $bg={bg}>
                    <td>{name}</td>
                    <td>{name === "在边上延伸" && <Tick type="checkbox" aria-label={name} />}</td>
                    <td />
                  </ParamRow>
                ))
              )}
            </tbody>
          </ParamTable>
          <ParamScroll>
            <button aria-label="向上"><Ico n="chevU" s={9} /></button>
            <Thumb $size={93} />
            <button aria-label="向下"><Ico n="chevD" s={9} /></button>
          </ParamScroll>
        </ParamFrame>
      </WinMain>
      <WinRail $right>
        <WinButton $kind="gear" aria-label="设置"><Ico n="gear" s={17} /></WinButton>
        {RIGHT_TEXT.map((t) => <WinButton $kind="wide" key={t}>{t}</WinButton>)}
      </WinRail>
    </WinBody>
  </Window>
);

/* ---------- operation tree ---------- */

type Guide = "line" | "tee" | "end" | "plus" | "minus";

const GuideMark = ({ g }: { g: Guide }) => (
  <Svg width="19" height="20" viewBox="0 0 19 20" fill="none" stroke="#8ea591" strokeDasharray="1 1">
    {(g === "line" || g === "tee") && <path d="M9.500 0V20" />}
    {g === "end" && <path d="M9.500 0V10" />}
    {(g === "tee" || g === "end") && <path d="M10 10.500H18" />}
    {(g === "plus" || g === "minus") && (
      <>
        <path d="M9.500 0V20M14 10.500H18" />
        <rect x="5.500" y="6.500" width="8" height="8" fill="#fff" stroke="#999" strokeDasharray="none" />
        <path d={g === "plus" ? "M7 10.500H12M9.500 8V13" : "M7 10.500H12"} stroke="#111" strokeDasharray="none" />
      </>
    )}
  </Svg>
);

type Node = { name: string; guides: Guide[]; alert?: boolean; icon?: string; cells?: string[]; time: string; hot?: boolean };

const OPS = [
  "", "_COPY", "_INSTANCE", "_COPY_INSTANCE", "_INSTANCE_1", "_INSTANCE_2", "_COPY_INSTANCE_1", "_INSTANCE_INST...",
  "_COPY_INSTANCE...", "_INSTANCE_1_INS...", "_INSTANCE_3", "_COPY_INSTANCE_2", "_INSTANCE_INST...", "_COPY_INSTANCE...",
  "_INSTANCE_1_INS...", "_INSTANCE_4", "_COPY_INSTANCE_3", "_INSTANCE_INST...", "_COPY_INSTANCE...", "_INSTANCE_1_INS...",
];

const NODES: Node[] = [
  { name: "NC_PROGRAM", guides: [], time: "00:21:03" },
  { name: "未用项", guides: ["plus"], icon: "opFolder", time: "00:00:24" },
  { name: "TOP1", guides: ["minus"], alert: true, icon: "opFolder", time: "00:20:39" },
  { name: "A01", guides: ["line", "minus"], alert: true, icon: "opFolder", time: "00:20:39" },
  ...OPS.map((s, i): Node => ({
    name: "等高" + s,
    guides: ["line", "line", i === OPS.length - 1 ? "end" : "tee"],
    alert: true,
    icon: "op",
    cells: ["1", "D2粗刀", "0 mm", "0.0000", "0.0000", "18000...", "1000 ..."],
    time: "00:01:01",
    hot: i === 0,
  })),
  ...Array.from({ length: 12 }, (_, i): Node => ({
    name: "A" + String(i + 2).padStart(2, "0"),
    guides: ["line", "tee"],
    alert: true,
    icon: "opFolder",
    time: "00:00:00",
  })),
];

const HEADS = ["名称", "换刀", "刀...", "刀具", "切削...", "余量", "底面...", "速度", "进给", "时间", "刀"];
const WIDTHS = [235, 45, 32, 58, 45, 46, 46, 55, 51, 56];
const EMPTY = ["", "", "", "", "", "", ""];

const OperationNavigator = () => (
  <Navigator>
    <NavTitle>
      <Ico n="navTitle" />
      工序导航器 - 程序顺序
      <button aria-label="最大化"><Ico n="panelMax" s={14} /></button>
    </NavTitle>
    <GridFrame>
      <GridClip>
        <Grid>
          <colgroup>{WIDTHS.map((w, i) => <col key={i} width={w} />)}<col /></colgroup>
          <thead><tr>{HEADS.map((h) => <th key={h}>{h}</th>)}</tr></thead>
          <tbody>
            {NODES.map((n, i) => (
              <Row key={i} $alt={i % 2 === 1} $hot={n.hot}>
                <td>
                  <TreeCell $root={i === 0}>
                    {n.guides.map((g, k) => <GuideMark key={k} g={g} />)}
                    {n.alert && <Alert />}
                    {n.icon && <Ico n={n.icon} s={15} />}
                    <span>{n.name}</span>
                  </TreeCell>
                </td>
                <td>{n.hot && <Ico n="drillGrey" s={17} />}</td>
                {(n.cells ?? EMPTY).map((c, k) => <td key={k}>{c}</td>)}
                <td>{n.time}</td>
                <td />
              </Row>
            ))}
          </tbody>
        </Grid>
      </GridClip>
      <FootScroll>
        <button aria-label="向左"><Ico n="chevL" s={9} /></button>
        <Thumb $flat $size={97} />
        <button aria-label="向右"><Ico n="chevR" s={9} /></button>
      </FootScroll>
      <SideScroll>
        <button aria-label="向上"><Ico n="chevU" s={9} /></button>
        <Thumb $size={83} />
        <button aria-label="向下"><Ico n="chevD" s={9} /></button>
      </SideScroll>
    </GridFrame>
    <Splitter />
    <Fold><Caret $side />相关性</Fold>
    <Fold><Caret $side />细节</Fold>
  </Navigator>
);

/* Model coordinates are window coordinates; the group shifts them to the canvas origin. */
const Model = () => (
  <svg role="img" aria-label="257X229X2">
    <g transform="translate(-782 -195)">
      <g fill="#ffae03" stroke="#a87a1c" strokeWidth="1">
        <path d="M946 190V197H954A4.500 4.500 0 0 1 954 206H946V296.500H1347V248H1254V252.500H1246V206H1238A4.500 4.500 0 0 1 1238 197H1246V190Z" />
        <path d="M1329 190V219L1475 296.500H2400V190Z" />
        <path d="M946 330.500H1100L1246 408V453.500H1238A4.500 4.500 0 0 0 1238 462.500H1246V588H1238A4.500 4.500 0 0 0 1238 597H1246V643H1254V638.500H1347V687.500H946V597H954A4.500 4.500 0 0 0 954 588H946V384.500H954A4.500 4.500 0 0 0 954 375.500H946Z" />
        <path d="M1227.500 330.500H2400V687.500H1475L1329 609.500V564.500H1337A4.500 4.500 0 0 0 1337 555.500H1329V430H1337A4.500 4.500 0 0 0 1337 421H1329V374H1321V378.500H1227.500Z" />
      </g>
      <path d="M930.500 190V703.500H2400" fill="none" stroke="#3f55f5" strokeWidth="2" />
      <g fontFamily="Liberation Sans" fontSize="13">
        <path d="M930.500 703V619" stroke="#2f9231" strokeWidth="2" />
        <path d="M930.500 600 934 620H927Z" fill="#2f9231" />
        <path d="M931 703.500H1014" stroke="#c33034" strokeWidth="2" />
        <path d="M1033 703.500 1014 700V707Z" fill="#d8383a" />
        <circle cx="930.500" cy="703.500" r="3.500" fill="#0a3cf0" />
        <text x="935" y="598" fill="#2f8a35">YM</text>
        <text x="1017" y="699" fill="#c33a3a">XM</text>
        <text x="931" y="704" fill="#2446f0">ZM</text>
        <rect x="866.500" y="877.500" width="43" height="42" fill="none" stroke="#b5b5b5" />
        <path d="M888.500 877V844" stroke="#2f9a31" strokeWidth="5" />
        <path d="M888.500 826 894 845H883Z" fill="#2f9a31" />
        <path d="M910 898.500H942" stroke="#e03a3a" strokeWidth="5" />
        <path d="M962 898.500 941 893V904Z" fill="#e03a3a" />
        <circle cx="888" cy="898.500" r="5" fill="#0a3cf0" />
        <text x="884" y="820" fill="#2f8a35" fontSize="12">Y</text>
        <text x="967" y="903" fill="#c33a3a" fontSize="12">X</text>
      </g>
    </g>
  </svg>
);

const TABS = ["主页", "曲线", "几何体", "分析", "视图", "应用模块", "星空 V8.0", "模圣软件", "模圣设计", "睿鑫导出电极", "机明软件2025"];
const RAIL = ["gear", "parts", "bracket", "opnav", "tablebox", "machine", "snap", "globe", "clock"];
const SIDE = ["def", "ont", "orient", "tiles", "eraser", "holecolor", "fillet", "delface", "contour", "circleDot", "circle", "pathExport", "docs", "greenLeft", "greenRight", "check", "drillCube", "arc", "millSurf", "drillAb"];
const PICK = ["no", "cubeO", "sheet", "cubeTop", "cubeEdge", "curve", "points", "snapFilter", "snapDim", "hex", "cubeTarget", "boxTarget"];

const Tools = ({ names, on }: { names: string[]; on?: string }) => (
  <>
    {names.map((n) => (
      <Tool key={n} $on={n === on} aria-label={n}><Ico n={n} s={17} /></Tool>
    ))}
  </>
);

const MenuLines = ({ w, gap }: { w: number; gap: number }) => (
  <Svg width={w} height={gap * 2 + 2} stroke={INK} strokeWidth={gap > 6 ? 2 : 1}>
    {[0, 1, 2].map((i) => <path key={i} d={`M0 ${gap * i + 1}H${w}`} />)}
  </Svg>
);

export default function App() {
  return (
    <Page>
      <Global />
      <Header>
        <TitleRow>
          <Quick>
            <Brand>NX</Brand>
            <QuickRule />
            <QuickButton $w={32} aria-label="保存"><Ico n="save" /></QuickButton>
            <QuickRule />
            <QuickButton $w={44} aria-label="撤消"><Ico n="undo" /><Caret $light /></QuickButton>
            <QuickRule />
            {["cut", "copy", "paste", "pasteTo"].map((n) => <QuickButton key={n} aria-label={n}><Ico n={n} /></QuickButton>)}
            <QuickRule />
            <QuickButton $w={44} aria-label="曲线"><Ico n="greenCurve" /><Caret $light /></QuickButton>
            <QuickRule />
            <QuickButton $w={28} aria-label="语音"><Ico n="mic" /></QuickButton>
            <QuickRule />
            <QuickButton $w={30} aria-label="切换"><Ico n="swap" /></QuickButton>
            <QuickButton $w={26} aria-label="层叠"><Ico n="windows" /></QuickButton>
            <QuickButton $w={58} aria-label="窗口"><Ico n="square" />窗口<Caret $light /></QuickButton>
            <Caret $light />
          </Quick>
          <WindowTitle>NX 2406 - 加工 - D:\图档\上海沪工\2024\8-5\257X229X2.prt</WindowTitle>
          <WindowControls>
            <Siemens>SIEMENS</Siemens>
            {["minW", "restoreW", "closeW"].map((n) => <HeadButton key={n} $tight aria-label={n}><Ico n={n} s={13} /></HeadButton>)}
          </WindowControls>
        </TitleRow>
        <MenuRow>
          <Tab $file>文件(F)</Tab>
          {TABS.map((t) => <Tab key={t} $active={t === "模圣软件"}>{t}</Tab>)}
          <HeadTools>
            <HeadButton aria-label="满意"><Ico n="smile" s={17} /></HeadButton>
            <HeadButton aria-label="不满意"><Ico n="frown" s={17} /></HeadButton>
            <Search>
              <input placeholder="搜索 (Ctrl+Space)" aria-label="搜索" />
              <Ico n="lens" s={17} />
            </Search>
            {["expand", "chevUp", "helpW", "bang"].map((n) => <HeadButton key={n} aria-label={n}><Ico n={n} s={17} /></HeadButton>)}
          </HeadTools>
        </MenuRow>
      </Header>

      <Ribbon>
        <Group $w={49}>
          <MenuBig $w={52}><MenuLines w={18} gap={8} />菜单<Caret /></MenuBig>
        </Group>
        <Rule />
        {GROUPS.map((g) => (
          <React.Fragment key={g.name}>
            <Group $w={g.w}>
              <GroupBody $pad={g.pad}>
                {g.blocks.map((b, i) => <BlockView key={i} b={b} />)}
              </GroupBody>
              <GroupFoot>
                <span>{g.name}</span>
                <CornerButton aria-label={g.name + "选项"}><Caret /></CornerButton>
              </GroupFoot>
            </Group>
            <Rule />
          </React.Fragment>
        ))}
        <RibbonEnd><CornerButton aria-label="功能区选项"><Caret /></CornerButton></RibbonEnd>
      </Ribbon>

      <Bar>
        <MenuButton><MenuLines w={12} gap={5} /><span>菜单(<u>M</u>)</span><Caret /></MenuButton>
        <Tools names={["tbProgram", "tbTool", "tbGeom", "tbMethod"]} on="tbProgram" />
        <Rule $h={20} $gap={2} />
        <SelectBox $w={149} $lead>
          <select aria-label="类型过滤器"><option>刀轨</option></select>
          <Caret />
        </SelectBox>
        <Tool $wide aria-label="过滤"><Ico n="filter" s={17} /></Tool>
        <SelectBox $w={156}>
          <select aria-label="选择范围"><option>整个装配</option></select>
          <Caret />
        </SelectBox>
        <PickTools><Tools names={PICK} on="snapFilter" /></PickTools>
        <BarCaret aria-label="更多选择"><Caret /></BarCaret>
        <Tools names={["cubeSlant", "cubeSection"]} />
        <Rule $h={20} $gap={6} />
        <Tools names={["mcs", "axisEye", "eyeOff"]} on="mcs" />
        <Rule $h={20} $gap={6} />
        <Tools names={["wireCube", "purple", "xy", "blocks", "rulerS"]} />
        <Rule $h={20} $gap={3} />
        <BarEnd><Caret as="div" /></BarEnd>
      </Bar>

      <Work>
        <Rail>
          {RAIL.map((n, i) => (
            <RailTab key={n} $first={i === 0} $on={n === "opnav"} aria-label={n}><Ico n={n} s={i === 0 ? 18 : 24} /></RailTab>
          ))}
        </Rail>
        <OperationNavigator />
        <SideTools>
          {SIDE.map((n) => <button key={n} aria-label={n}><Ico n={n} s={24} /></button>)}
          <hr />
          <Collapse />
        </SideTools>
        <Doc>
          <DocTabs>
            <DocTab>
              <Ico n="tabPath" />
              257X229X2.prt
              <button aria-label="已修改"><Ico n="tabEdit" s={11} /></button>
              <button aria-label="关闭"><Ico n="tabClose" s={10} /></button>
            </DocTab>
          </DocTabs>
          <Canvas><Model /></Canvas>
          <Watermark>UG<b>爱好者论坛</b> WWW.UGSNX.COM</Watermark>
          <Assistant />
        </Doc>
      </Work>
    </Page>
  );
}
